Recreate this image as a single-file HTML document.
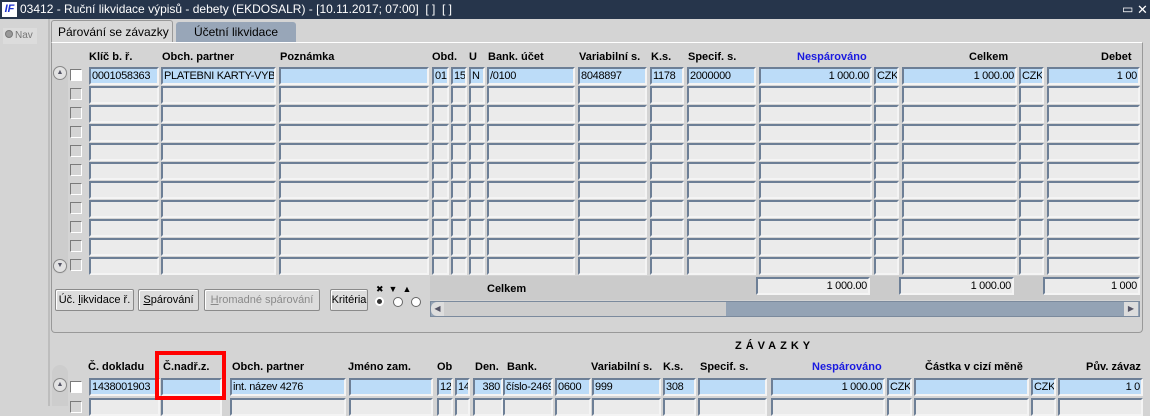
<!DOCTYPE html>
<html><head><meta charset="utf-8">
<style>
*{box-sizing:border-box;margin:0;padding:0}
body{width:1150px;height:406px;overflow:hidden;background:#d4d4d4;font-family:"Liberation Sans",sans-serif;font-size:11px;color:#000;position:relative}
.a{position:absolute}
.title{left:0;top:0;width:1150px;height:19px;background:#26354b;color:#fff;font-size:12px;line-height:19px}
.c{position:absolute;height:18px;background:#ebebeb;border:2px solid #6d7f96;border-right-color:#f4f4f4;border-bottom-color:#f4f4f4;line-height:14px;padding:0 1px;white-space:nowrap;overflow:hidden;font-size:11px;letter-spacing:-0.3px}
.c.b{background:#bcdcf8}
.r{text-align:right}
.h{position:absolute;font-weight:bold;font-size:11px;white-space:nowrap}
.cb{position:absolute;width:12px;height:12px;border:1px solid #7a7a7a;border-right-color:#fff;border-bottom-color:#fff;background:#d4d4d4}
.btn{position:absolute;height:22px;border:1px solid #8a8a8a;border-radius:2px;background:#dcdcdc;font-size:11px;line-height:20px;text-align:center;box-shadow:inset 1px 1px #fff}
</style></head><body>
<div class="a title"><span style="display:inline-block;width:15px;height:15px;background:#fff;margin:2px 3px 0 2px;vertical-align:top;color:#1a2fd0;font-weight:bold;font-style:italic;font-size:11px;line-height:15px;text-align:center">IF</span>03412 - Ruční likvidace výpisů - debety (EKDOSALR) - [10.11.2017; 07:00]&nbsp; [ ] &nbsp;[ ]
<span class="a" style="left:1122px;top:0;font-size:12px">▭</span><span class="a" style="left:1137px;top:0;font-size:13px">✕</span></div>
<div class="a" style="left:3px;top:28px;width:34px;height:16px;background:#dcdcdc;color:#777;font-size:10px;line-height:16px"><span style="display:inline-block;width:8px;height:8px;border-radius:50%;background:#999;border:1px solid #777;margin:0 2px 0 2px"></span>Nav</div>
<div class="a" style="left:48px;top:19px;width:2px;height:387px;background:#bdbdbd"></div>
<div class="a" style="left:51px;top:20px;width:122px;height:23px;background:#d8d8d8;border:1px solid #999;border-bottom:none;border-radius:3px 3px 0 0;font-size:12px;line-height:22px;padding-left:6px">Párování se závazky</div>
<div class="a" style="left:176px;top:22px;width:120px;height:20px;background:#98a6b8;border-radius:3px 3px 0 0;font-size:12px;line-height:20px;text-align:center">Účetní likvidace</div>
<div class="a" style="left:51px;top:42px;width:1092px;height:291px;border:1px solid #999;border-top-color:#fff;border-radius:0 0 4px 4px;background:#d4d4d4"></div>
<div class="a" style="left:430px;top:276px;width:710px;height:24px;background:#cbcbcb"></div>
<div class="a" style="left:430px;top:301px;width:710px;height:16px;background:#94a3b5;border:1px solid #7b8a9d"></div>
<div class="a" style="left:444px;top:302px;width:282px;height:14px;background:#cdcdcd"></div>
<div class="a" style="left:431px;top:302px;width:13px;height:14px;background:#ddd;border-radius:6px 0 0 6px;font-size:8px;color:#556;line-height:14px;text-align:center">◀</div>
<div class="a" style="left:1124px;top:302px;width:14px;height:14px;background:#ddd;font-size:8px;color:#556;line-height:14px;text-align:center">▶</div>
<div class="a" style="left:52px;top:66px;width:16px;height:208px;background:#cdcdcd;border-radius:8px"></div>
<div class="a" style="left:53px;top:66px;width:14px;height:14px;border:1px solid #888;border-radius:7px;background:#e2e2e2;font-size:7px;line-height:12px;text-align:center;color:#556">▲</div>
<div class="a" style="left:53px;top:259px;width:14px;height:14px;border:1px solid #888;border-radius:7px;background:#e2e2e2;font-size:7px;line-height:12px;text-align:center;color:#556">▼</div>
<div class="a" style="left:52px;top:365px;width:16px;height:41px;background:#cdcdcd;border-radius:8px 8px 0 0"></div>
<div class="a" style="left:53px;top:378px;width:14px;height:14px;border:1px solid #888;border-radius:7px;background:#e2e2e2;font-size:7px;line-height:12px;text-align:center;color:#556">▲</div>
<div class="h" style="left:89px;top:51px">Klíč b. ř.</div>
<div class="h" style="left:162px;top:51px">Obch. partner</div>
<div class="h" style="left:280px;top:51px">Poznámka</div>
<div class="h" style="left:432px;top:51px">Obd.</div>
<div class="h" style="left:469px;top:51px">U</div>
<div class="h" style="left:488px;top:51px">Bank. účet</div>
<div class="h" style="left:579px;top:51px">Variabilní s.</div>
<div class="h" style="left:651px;top:51px">K.s.</div>
<div class="h" style="left:688px;top:51px">Specif. s.</div>
<div class="h" style="left:797px;top:51px;color:#1a1ae0">Nespárováno</div>
<div class="h" style="left:969px;top:51px">Celkem</div>
<div class="h" style="left:1101px;top:51px">Debet</div>
<div class="h" style="left:487px;top:283px">Celkem</div>
<div class="c r" style="left:756px;top:277px;width:114px">1 000.00</div>
<div class="c r" style="left:899px;top:277px;width:115px">1 000.00</div>
<div class="c r" style="left:1043px;top:277px;width:97px">1 000</div>
<div class="btn" style="left:55px;top:289px;width:79px">Úč. <u>l</u>ikvidace ř.</div>
<div class="btn" style="left:138px;top:289px;width:61px"><u>S</u>párování</div>
<div class="btn" style="left:204px;top:289px;width:116px;color:#8a8a8a"><u>H</u>romadné spárování</div>
<div class="btn" style="left:330px;top:289px;width:38px">Kritéria</div>
<div class="a" style="left:376px;top:284px;font-size:9px;letter-spacing:5px">✖▼▲</div>
<div class="a" style="left:375px;top:297px;width:9px;height:9px;border-radius:50%;background:#333;border:2px solid #fff"></div>
<div class="a" style="left:393px;top:297px;width:10px;height:10px;border-radius:50%;background:#fff;border:1px solid #666"></div>
<div class="a" style="left:411px;top:297px;width:10px;height:10px;border-radius:50%;background:#fff;border:1px solid #666"></div>
<div class="h" style="left:735px;top:340px;letter-spacing:4px">ZÁVAZKY</div>
<div class="h" style="left:88px;top:361px">Č. dokladu</div>
<div class="h" style="left:163px;top:361px">Č.nadř.z.</div>
<div class="h" style="left:232px;top:361px">Obch. partner</div>
<div class="h" style="left:348px;top:361px">Jméno zam.</div>
<div class="h" style="left:437px;top:361px">Ob</div>
<div class="h" style="left:475px;top:361px">Den.</div>
<div class="h" style="left:507px;top:361px">Bank.</div>
<div class="h" style="left:591px;top:361px">Variabilní s.</div>
<div class="h" style="left:663px;top:361px">K.s.</div>
<div class="h" style="left:700px;top:361px">Specif. s.</div>
<div class="h" style="left:812px;top:361px;color:#1a1ae0">Nespárováno</div>
<div class="h" style="left:925px;top:361px">Částka v cizí měně</div>
<div class="h" style="left:1086px;top:361px">Pův. závaz</div>
<div id="g"></div>
<div class="a" style="left:155px;top:351px;width:71px;height:49px;border:4px solid #f00"></div>
<script>
(function(){
var g=document.getElementById('g'),h='';
var colsA=[[89,70],[161,115],[279,150],[432,17],[451,16],[469,16],[487,88],[578,69],[650,34],[687,69],[759,113,1],[874,25],[902,115,1],[1019,25],[1047,93,1]];
var v1=['0001058363','PLATEBNI KARTY-VYBER','','01','15','N','/0100','8048897','1178','2000000','1 000.00','CZK','1 000.00','CZK','1 00'];
for(var r=0;r<11;r++){var y=67+r*19;
h+='<div class="cb" style="left:70px;top:'+(y+2)+'px;'+(r==0?'background:#fff':'')+'"></div>';
for(var i=0;i<colsA.length;i++){var c=colsA[i];h+='<div class="c'+(r==0?' b':'')+(c[2]?' r':'')+'" style="left:'+c[0]+'px;top:'+y+'px;width:'+c[1]+'px">'+(r==0?v1[i]:'')+'</div>';}}
var colsB=[[89,71],[161,61],[230,116],[349,84],[437,16],[455,15],[473,30,1],[503,50],[555,36],[592,69],[663,33],[698,69],[771,114,1],[887,25],[914,115],[1031,25],[1058,85,1]];
var v2=['1438001903','','int. název 4276','','12','14','380','číslo-2469','0600','999','308','','1 000.00','CZK','','CZK','1 0'];
for(var r2=0;r2<2;r2++){var y2=378+r2*20;
h+='<div class="cb" style="left:70px;top:'+(y2+3)+'px;'+(r2==0?'background:#fff':'')+'"></div>';
for(var j=0;j<colsB.length;j++){var d=colsB[j];h+='<div class="c'+(r2==0?' b':'')+(d[2]?' r':'')+'" style="left:'+d[0]+'px;top:'+y2+'px;width:'+d[1]+'px">'+(r2==0?v2[j]:'')+'</div>';}}
g.innerHTML=h;
})();
</script>
</body></html>
